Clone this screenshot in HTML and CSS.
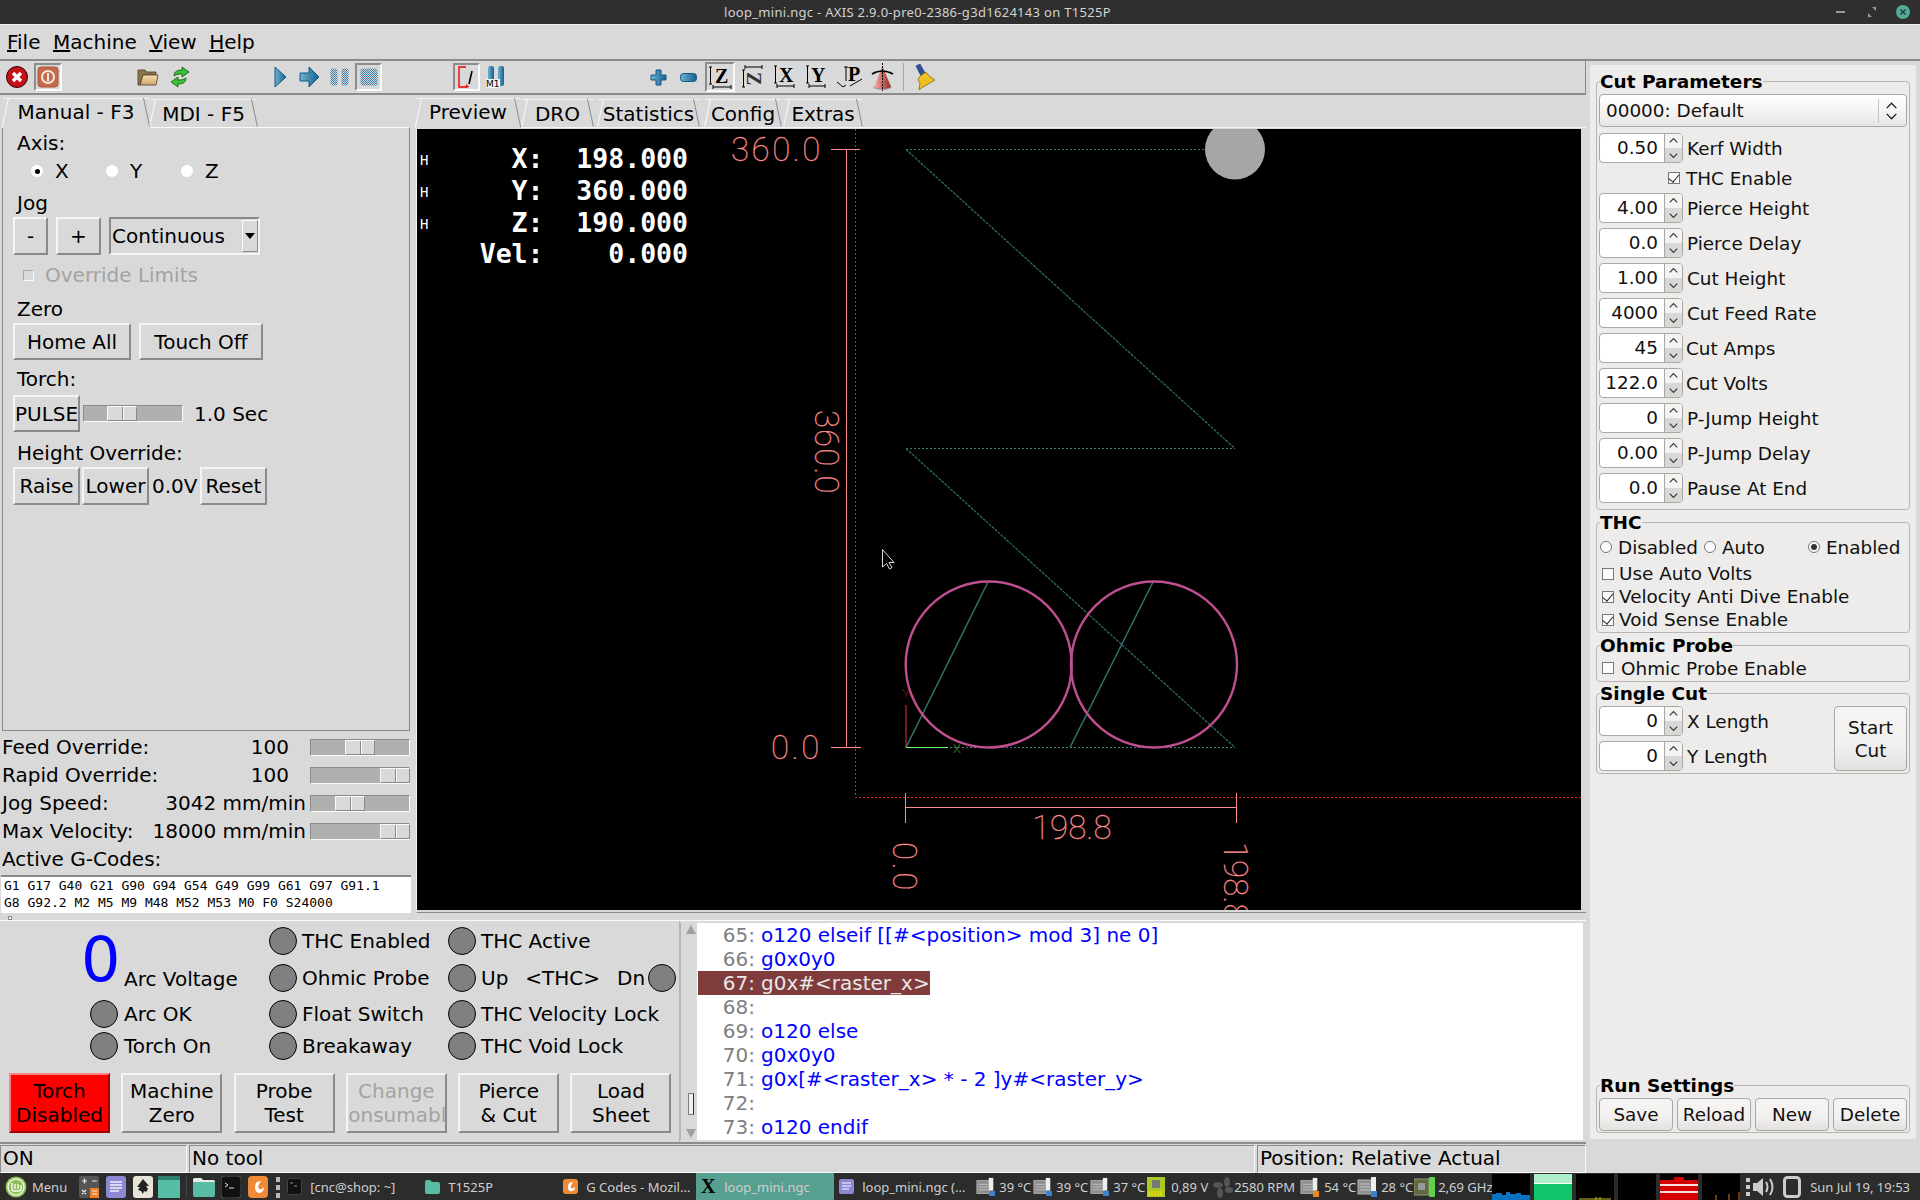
FILE: index.html
```html
<!DOCTYPE html>
<html lang="en">
<head>
  <title>loop_mini.ngc - AXIS</title>
  <meta charset="utf-8">
  <link rel="stylesheet" href="styles.css">
</head>
<body>
<svg class="defs" width="0" height="0">
  <defs>
    <linearGradient id="blue" x1="0" y1="0" x2="1" y2="0">
      <stop offset="0" stop-color="#6fb1d0"/><stop offset="1" stop-color="#17618f"/>
    </linearGradient>
    <linearGradient id="tan" x1="0" y1="0" x2="0" y2="1">
      <stop offset="0" stop-color="#f5deb0"/><stop offset="1" stop-color="#cfa76a"/>
    </linearGradient>
    <linearGradient id="cone" x1="0" y1="0" x2="1" y2="0">
      <stop offset="0" stop-color="#ffb0a8"/><stop offset="1" stop-color="#8e2a22"/>
    </linearGradient>
    <pattern id="dots" width="2" height="2" patternUnits="userSpaceOnUse">
      <rect width="2" height="2" fill="#d9d9d9"/><rect width="1" height="1" fill="#3a7ea6"/><rect x="1" y="1" width="1" height="1" fill="#3a7ea6"/>
    </pattern>
    <symbol id="spin-arrows" viewBox="0 0 18 30">
      <path d="M5 9l4-4 4 4M5 21l4 4 4-4" fill="none" stroke="#333" stroke-width="1.2"/>
    </symbol>
    <symbol id="temp-chip" viewBox="0 0 22 22">
      <rect x="1" y="4" width="14" height="14" fill="#8d8d8d" stroke="#b5b5b5"/>
      <path d="M3 8h10M3 11h10M3 14h10" stroke="#c6c6c6"/>
      <rect x="14" y="1" width="5" height="14" fill="#eee"/>
    </symbol>
  </defs>
</svg>

<header class="titlebar">
  <span class="title-text">loop_mini.ngc - AXIS 2.9.0-pre0-2386-g3d1624143 on T1525P</span>
  <div class="win-buttons">
    <svg width="14" height="14" viewBox="0 0 14 14"><rect x="1" y="6" width="9" height="2" fill="#9a9a9a"/></svg>
    <svg width="14" height="14" viewBox="0 0 14 14"><path d="M3 8v4h4zM11 6V2H7z" fill="#9a9a9a"/></svg>
    <svg width="16" height="16" viewBox="0 0 16 16"><circle cx="8" cy="8" r="7" fill="#56a89a"/><path d="M5.5 5.5l5 5M10.5 5.5l-5 5" stroke="#23403c" stroke-width="1.5"/></svg>
  </div>
</header>

<nav class="menubar">
  <span><u>F</u>ile</span><span><u>M</u>achine</span><span><u>V</u>iew</span><span><u>H</u>elp</span>
</nav>

<div class="workspace">
  <div class="app">
    <div class="toolbar">
      <svg class="ml6" width="22" height="22" viewBox="0 0 22 22"><circle cx="11" cy="11" r="10.5" fill="#c4121a" stroke="#300"/><path d="M7 7l8 8M15 7l-8 8" stroke="#fff" stroke-width="3.4"/></svg>
      <div class="sunken ml6 frame-28"><svg width="22" height="22" viewBox="0 0 22 22"><rect x="1" y="1" width="20" height="20" rx="3" fill="#c46b4b" stroke="#a9543a"/><circle cx="11" cy="11" r="6" fill="none" stroke="#f2e5de" stroke-width="2"/><path d="M11 7v8" stroke="#f2e5de" stroke-width="2"/></svg></div>
      <svg class="ml75" width="22" height="18" viewBox="0 0 22 18"><path d="M1 17V2h7l2 2h9v3H6L3 17z" fill="#8e744c" stroke="#4a3c24" stroke-width=".8"/><path d="M3 17L6 7h15l-2 10z" fill="url(#tan)" stroke="#4a3c24" stroke-width=".8"/></svg>
      <svg class="ml11" width="20" height="22" viewBox="0 0 20 22"><path d="M4 10C4 5 8 4 12 4V1l7 5-7 5V8c-3 0-5 0-8 2z" fill="#38c038" stroke="#0a5a0a" stroke-width=".8"/><path d="M16 12c0 5-4 6-8 6v3l-7-5 7-5v3c3 0 5 0 8-2z" fill="#38c038" stroke="#0a5a0a" stroke-width=".8"/></svg>
      <svg class="ml84" width="13" height="22" viewBox="0 0 13 22"><path d="M1 1l11 10L1 21z" fill="url(#blue)" stroke="#135a85"/></svg>
      <svg class="ml12" width="21" height="22" viewBox="0 0 21 22"><path d="M1 7h9V1l10 10-10 10v-6H1z" fill="url(#blue)" stroke="#135a85"/></svg>
      <svg class="ml10" width="19" height="18" viewBox="0 0 19 18"><rect x=".5" y=".5" width="7" height="17" rx="2" fill="url(#dots)"/><rect x="11.5" y=".5" width="7" height="17" rx="2" fill="url(#dots)"/></svg>
      <div class="sunken ml6 frame-27"><svg width="18" height="18" viewBox="0 0 18 18"><rect x=".5" y=".5" width="17" height="17" rx="2" fill="url(#dots)"/></svg></div>
      <div class="sunken ml71 frame-27"><svg width="20" height="24" viewBox="0 0 20 24"><path d="M9 2H2v20h7" fill="none" stroke="#e00" stroke-width="1.4"/><path d="M9 19l3 3-3 1z" fill="#e00"/><path d="M15 6l-3 13" stroke="#000" stroke-width="1.6"/></svg></div>
      <svg class="ml6" width="19" height="22" viewBox="0 0 19 22"><rect x="2" y="0" width="6" height="17" rx="2" fill="url(#blue)"/><rect x="12" y="0" width="6" height="20" rx="2" fill="url(#blue)"/><rect x="0" y="13" width="14" height="9" fill="#f4f4f4"/><text x="0" y="21" class="m1-text">M1</text></svg>
      <svg class="ml145" width="17" height="17" viewBox="0 0 17 17"><path d="M6 1h5v5h5v5h-5v5H6v-5H1V6h5z" fill="url(#blue)" stroke="#135a85"/></svg>
      <svg class="ml13" width="17" height="9" viewBox="0 0 17 9"><rect x=".5" y=".5" width="16" height="8" rx="3" fill="url(#blue)" stroke="#135a85"/></svg>
      <div class="sunken ml8 frame-30"><svg width="24" height="24" viewBox="0 0 24 24"><path d="M1 2h3M2.500 2v17M1 19h3M5 22h18M5 20v4M23 20v4" stroke="#000" fill="none"/><text x="7" y="18" class="view-text">Z</text></svg></div>
      <svg class="ml6" width="22" height="24" viewBox="0 0 22 24"><path d="M1 5h3M2.500 5v17M1 22h3M4 2h17M4 0v4M21 0v4" stroke="#000" fill="none"/><text transform="translate(6 7) rotate(90)" class="view-text dim">Z</text></svg>
      <svg class="ml10" width="22" height="24" viewBox="0 0 22 24"><path d="M1 1h3M2.500 1v17M1 18h3M4 21h17M4 19v4M21 19v4" stroke="#000" fill="none"/><text x="6" y="17" class="view-text">X</text></svg>
      <svg class="ml10" width="21" height="24" viewBox="0 0 21 24"><path d="M1 1h3M2.500 1v17M1 18h3M4 21h16M4 19v4M20 19v4" stroke="#000" fill="none"/><text x="6" y="17" class="view-text">Y</text></svg>
      <svg class="ml10" width="27" height="24" viewBox="0 0 27 24"><path d="M10 2v14M8 2h4M1 17l6 5 3-2M14 21l12-7" stroke="#000" fill="none"/><text x="12" y="16" class="view-text">P</text></svg>
      <svg class="ml8" width="23" height="28" viewBox="0 0 23 28"><ellipse cx="11.500" cy="24" rx="9" ry="3" fill="#999"/><path d="M11.500 3L3 24q8.500 4 17 0z" fill="url(#cone)"/><path d="M11.500 0v28" stroke="#000" stroke-dasharray="2 1"/><path d="M1 11q10-6 21 0M1 11l3-2M22 11l-3-2" stroke="#000" fill="none" stroke-width="1.5"/></svg>
      <span class="tool-sep ml9"></span>
      <svg class="ml11" width="20" height="26" viewBox="0 0 20 26"><path d="M1 2l4-2 5 9-4 3z" fill="#2f4f9f" stroke="#1b2f66" stroke-width=".6"/><path d="M5 12l6-4 3 4 6 4-12 7-4 3 1-7-2-3z" fill="#f0c020" stroke="#7a5c00" stroke-width=".7"/></svg>
    </div>

    <div class="upper">
      <div class="col-left">
        <div class="tabs">
          <div class="tab active tab-manual">Manual - F3</div>
          <div class="tab tab-mdi">MDI - F5</div>
        </div>
        <section class="manual">
          <div class="cap">Axis:</div>
          <div class="axis-row">
            <span class="axis"><i class="tk-radio on"></i>X</span>
            <span class="axis"><i class="tk-radio"></i>Y</span>
            <span class="axis"><i class="tk-radio"></i>Z</span>
          </div>
          <div class="cap mt4">Jog</div>
          <div class="row row-38 gap8">
            <button class="btn jog-minus">-</button>
            <button class="btn jog-plus">+</button>
            <div class="tk-combo"><span>Continuous</span><b class="tk-drop"></b></div>
          </div>
          <div class="override"><i class="tk-check"></i>Override Limits</div>
          <div class="cap mt6">Zero</div>
          <div class="row row-37 gap8">
            <button class="btn home-all">Home All</button>
            <button class="btn touch-off">Touch Off</button>
          </div>
          <div class="cap mt5">Torch:</div>
          <div class="row row-37 mt2">
            <button class="btn small-btn">PULSE</button>
            <div class="tk-scale pulse-scale"><div class="tk-slider" style="margin-left:23px"></div></div>
            <span class="pulse-val">1.0 Sec</span>
          </div>
          <div class="cap mt7">Height Override:</div>
          <div class="row row-38 gap2">
            <button class="btn small-btn">Raise</button>
            <button class="btn small-btn">Lower</button>
            <span class="volt-val">0.0V</span>
            <button class="btn small-btn">Reset</button>
          </div>
        </section>
        <div class="ov-rows">
          <div class="ov-row"><div class="ov-text"><span>Feed Override:</span><span class="ov-pct">100</span></div><div class="tk-scale"><div class="tk-slider" style="margin-left:34px"></div></div></div>
          <div class="ov-row"><div class="ov-text"><span>Rapid Override:</span><span class="ov-pct">100</span></div><div class="tk-scale"><div class="tk-slider" style="margin-left:69px"></div></div></div>
          <div class="ov-row"><div class="ov-text"><span>Jog Speed:</span><span>3042 mm/min</span></div><div class="tk-scale"><div class="tk-slider" style="margin-left:24px"></div></div></div>
          <div class="ov-row"><div class="ov-text"><span>Max Velocity:</span><span>18000 mm/min</span></div><div class="tk-scale"><div class="tk-slider" style="margin-left:69px"></div></div></div>
          <div class="ov-row">Active G-Codes:</div>
        </div>
        <div class="gcodes">G1 G17 G40 G21 G90 G94 G54 G49 G99 G61 G97 G91.1<br>G8 G92.2 M2 M5 M9 M48 M52 M53 M0 F0 S24000</div>
        <i class="sash"></i>
      </div>

      <div class="col-preview">
        <div class="tabs">
          <div class="tab active tab-preview">Preview</div>
          <div class="tab tab-dro">DRO</div>
          <div class="tab tab-stats">Statistics</div>
          <div class="tab tab-config">Config</div>
          <div class="tab tab-extras">Extras</div>
        </div>
        <div class="preview">
          <svg class="gl" width="1164" height="781" viewBox="417 129 1164 781">
            <rect x="417" y="129" width="1164" height="781" fill="#000"/>
            <!-- soft limits -->
            <path d="M855.500 129V797.500H1581" class="limits"/>
            <!-- program path -->
            <path d="M906 149.500H1235M906 448.500H1235M906 747.500H1235" class="feed dotted"/>
            <path d="M906 149.500L1235 448.500M906 448.500L1235 747.500" class="feed thin"/>
            <path d="M906 747.500L988 582M1070 747.500L1153 582" class="feed"/>
            <circle cx="988.700" cy="664.500" r="83" class="arc"/>
            <circle cx="1154" cy="664.500" r="83" class="arc"/>
            <!-- extents -->
            <path d="M846.500 149.500V747.500M831 149.500H860M831 747.500H861M905.500 807.500H1236.500M905.500 793V823M1236.500 793V823" class="extent"/>
            <text x="731" y="161" class="dim-text">360.0</text>
            <text x="771" y="759" class="dim-text">0.0</text>
            <text x="1032" y="839" class="dim-text" textLength="82">198.8</text>
            <text transform="translate(815 410) rotate(90)" class="dim-text" textLength="86">360.0</text>
            <text transform="translate(893 842) rotate(90)" class="dim-text">0.0</text>
            <text transform="translate(1224 842) rotate(90)" class="dim-text" textLength="82">198.8</text>
            <!-- origin -->
            <path d="M906 747.500V705" stroke="#e33" fill="none"/>
            <path d="M906 747.500H948" stroke="#6f6" fill="none"/>
            <text x="902" y="698" class="axis-label y-label">Y</text>
            <text x="953" y="753" class="axis-label x-label">X</text>
            <circle cx="1235" cy="149.500" r="30" fill="#a6a6a6"/>
            <path d="M882.500 549.500V567l4-3.500 3 5.500 2.500-1.500-3-5h5z" fill="#000" stroke="#ddd"/>
            <!-- position readout -->
            <text x="420" y="165" class="homed">H</text>
            <text x="420" y="197" class="homed">H</text>
            <text x="420" y="229" class="homed">H</text>
            <text x="543.500" y="168" class="dro">X:</text><text x="688" y="168" class="dro">198.000</text>
            <text x="543.500" y="200" class="dro">Y:</text><text x="688" y="200" class="dro">360.000</text>
            <text x="543.500" y="232" class="dro">Z:</text><text x="688" y="232" class="dro">190.000</text>
            <text x="543.500" y="263" class="dro">Vel:</text><text x="688" y="263" class="dro">0.000</text>
          </svg>
        </div>
      </div>
    </div>

    <div class="lower">
      <div class="plasma">
        <div class="leds">
          <div class="arc-volt"><span class="big-zero">0</span><span class="arc-label">Arc Voltage</span></div>
          <div class="led-cell"><i class="led"></i>THC Enabled</div>
          <div class="led-cell cell-c"><i class="led"></i>THC Active</div>
          <div class="led-cell"><i class="led"></i>Ohmic Probe</div>
          <div class="led-cell cell-c"><i class="led"></i><span>Up</span><span class="thc-mid">&lt;THC&gt;</span><span class="thc-dn">Dn</span><i class="led"></i></div>
          <div class="led-cell cell-a"><i class="led"></i>Arc OK</div>
          <div class="led-cell"><i class="led"></i>Float Switch</div>
          <div class="led-cell cell-c"><i class="led"></i>THC Velocity Lock</div>
          <div class="led-cell cell-a"><i class="led"></i>Torch On</div>
          <div class="led-cell"><i class="led"></i>Breakaway</div>
          <div class="led-cell cell-c"><i class="led"></i>THC Void Lock</div>
        </div>
        <div class="plasma-btns">
          <button class="btn tall red"><span>Torch</span><span>Disabled</span></button>
          <button class="btn tall"><span>Machine</span><span>Zero</span></button>
          <button class="btn tall"><span>Probe</span><span>Test</span></button>
          <button class="btn tall off"><span>Change</span><span>Consumable</span></button>
          <button class="btn tall"><span>Pierce</span><span>&amp; Cut</span></button>
          <button class="btn tall"><span>Load</span><span>Sheet</span></button>
        </div>
      </div>
      <div class="code-scroll">
        <i class="arrow up"></i>
        <i class="thumb"></i>
        <i class="arrow"></i>
      </div>
      <div class="code">
        <div class="ln"><b>65:</b>o120 elseif [[#&lt;position&gt; mod 3] ne 0]</div>
        <div class="ln"><b>66:</b>g0x0y0</div>
        <div class="ln cur"><b>67:</b>g0x#&lt;raster_x&gt;</div>
        <div class="ln"><b>68:</b></div>
        <div class="ln"><b>69:</b>o120 else</div>
        <div class="ln"><b>70:</b>g0x0y0</div>
        <div class="ln"><b>71:</b>g0x[#&lt;raster_x&gt; * - 2 ]y#&lt;raster_y&gt;</div>
        <div class="ln"><b>72:</b></div>
        <div class="ln"><b>73:</b>o120 endif</div>
      </div>
    </div>

    <div class="status">
      <div class="st st-on">ON</div>
      <div class="st st-tool">No tool</div>
      <div class="st st-pos">Position: Relative Actual</div>
    </div>
  </div>

  <aside class="side">
    <fieldset class="grp cut">
      <legend>Cut Parameters</legend>
      <div class="combo"><span>00000: Default</span><svg width="28" height="24" viewBox="0 0 28 24"><path d="M8 9l5-5 5 5M8 15l5 5 5-5" fill="none" stroke="#222" stroke-width="1.4"/></svg></div>
      <div class="srow mt6"><div class="spin"><span class="spin-val">0.50</span><svg class="spin-btn" width="18" height="30"><use href="#spin-arrows"/></svg></div><label>Kerf Width</label></div>
      <div class="srow thc-row"><i class="gtk-check on"></i><label>THC Enable</label></div>
      <div class="srow"><div class="spin"><span class="spin-val">4.00</span><svg class="spin-btn" width="18" height="30"><use href="#spin-arrows"/></svg></div><label>Pierce Height</label></div>
      <div class="srow mt5"><div class="spin"><span class="spin-val">0.0</span><svg class="spin-btn" width="18" height="30"><use href="#spin-arrows"/></svg></div><label>Pierce Delay</label></div>
      <div class="srow mt5"><div class="spin"><span class="spin-val">1.00</span><svg class="spin-btn" width="18" height="30"><use href="#spin-arrows"/></svg></div><label>Cut Height</label></div>
      <div class="srow mt5"><div class="spin"><span class="spin-val">4000</span><svg class="spin-btn" width="18" height="30"><use href="#spin-arrows"/></svg></div><label>Cut Feed Rate</label></div>
      <div class="srow mt5"><div class="spin"><span class="spin-val">45</span><svg class="spin-btn" width="18" height="30"><use href="#spin-arrows"/></svg></div><label class="tight">Cut Amps</label></div>
      <div class="srow mt5"><div class="spin"><span class="spin-val">122.0</span><svg class="spin-btn" width="18" height="30"><use href="#spin-arrows"/></svg></div><label class="tight">Cut Volts</label></div>
      <div class="srow mt5"><div class="spin"><span class="spin-val">0</span><svg class="spin-btn" width="18" height="30"><use href="#spin-arrows"/></svg></div><label>P-Jump Height</label></div>
      <div class="srow mt5"><div class="spin"><span class="spin-val">0.00</span><svg class="spin-btn" width="18" height="30"><use href="#spin-arrows"/></svg></div><label>P-Jump Delay</label></div>
      <div class="srow mt5"><div class="spin"><span class="spin-val">0.0</span><svg class="spin-btn" width="18" height="30"><use href="#spin-arrows"/></svg></div><label>Pause At End</label></div>
    </fieldset>

    <fieldset class="grp thc">
      <legend>THC</legend>
      <div class="thc-modes">
        <span class="mode mode-dis"><i class="gtk-radio"></i>Disabled</span>
        <span class="mode mode-auto"><i class="gtk-radio"></i>Auto</span>
        <span class="mode"><i class="gtk-radio on"></i>Enabled</span>
      </div>
      <div class="crow first"><i class="gtk-check"></i>Use Auto Volts</div>
      <div class="crow"><i class="gtk-check on"></i>Velocity Anti Dive Enable</div>
      <div class="crow"><i class="gtk-check on"></i>Void Sense Enable</div>
    </fieldset>

    <fieldset class="grp ohmic">
      <legend>Ohmic Probe</legend>
      <div class="crow"><i class="gtk-check"></i>Ohmic Probe Enable</div>
    </fieldset>

    <fieldset class="grp single">
      <legend>Single Cut</legend>
      <div class="single-body">
        <div>
          <div class="srow"><div class="spin"><span class="spin-val">0</span><svg class="spin-btn" width="18" height="30"><use href="#spin-arrows"/></svg></div><label>X Length</label></div>
          <div class="srow mt5"><div class="spin"><span class="spin-val">0</span><svg class="spin-btn" width="18" height="30"><use href="#spin-arrows"/></svg></div><label>Y Length</label></div>
        </div>
        <button class="gtk-btn start-cut">Start<br>Cut</button>
      </div>
    </fieldset>

    <fieldset class="grp run">
      <legend>Run Settings</legend>
      <div class="run-btns">
        <button class="gtk-btn">Save</button>
        <button class="gtk-btn">Reload</button>
        <button class="gtk-btn">New</button>
        <button class="gtk-btn">Delete</button>
      </div>
    </fieldset>
  </aside>
</div>

<footer class="taskbar">
  <svg class="ml5" width="22" height="22" viewBox="0 0 22 22"><circle cx="11" cy="11" r="10.500" fill="#8cc152"/><circle cx="11" cy="11" r="8" fill="none" stroke="#f2f2f2" stroke-width="1.500"/><path d="M7 7v6q0 2 2 2h5q2 0 2-2V9M10 8v5M13 8v5" fill="none" stroke="#fff" stroke-width="1.300"/></svg>
  <span class="ml5 tk-text">Menu</span>
  <svg class="ml12" width="20" height="22" viewBox="0 0 20 22"><rect x="0" y="0" width="20" height="22" rx="2" fill="#555"/><rect x="11" y="12" width="9" height="10" fill="#f07f2a"/><path d="M3 5h5M5.500 2.500v5M13 5h5M3 14l4 4M7 14l-4 4M13 15h5M13 18h5" stroke="#eee" stroke-width="1.200"/></svg>
  <svg class="ml7" width="20" height="22" viewBox="0 0 20 22"><rect width="20" height="22" rx="3" fill="#8c88d4"/><path d="M4 6h12M4 9h12M4 12h12M4 15h9" stroke="#f1f1fb" stroke-width="1.300"/></svg>
  <svg class="ml7" width="20" height="22" viewBox="0 0 20 22"><rect width="20" height="22" rx="3" fill="#e8e4d8"/><path d="M10 3l6 7h-3l2 3-2 3-2-1-1 3-2-3-3-1 2-3H4z" fill="#222"/></svg>
  <svg class="ml5" width="22" height="22" viewBox="0 0 22 22"><rect width="22" height="22" fill="#57bda5"/><rect width="22" height="4" fill="#2f7f6e"/></svg>
  <span class="task-sep ml6"></span>
  <svg class="ml6" width="22" height="20" viewBox="0 0 22 20"><path d="M0 3q0-2 2-2h6l2 2h10q2 0 2 2v13q0 2-2 2H2q-2 0-2-2z" fill="#57bda5"/><path d="M0 5V3q0-2 2-2h6l2 2h10q2 0 2 2z" fill="#e8e8e8"/></svg>
  <svg class="ml6" width="20" height="22" viewBox="0 0 20 22"><rect width="20" height="22" rx="3" fill="#111" stroke="#555"/><path d="M4 7l3 2-3 2M8 12h5" stroke="#ddd" fill="none"/></svg>
  <svg class="ml7" width="20" height="22" viewBox="0 0 20 22"><rect width="20" height="22" rx="4" fill="#f08a36"/><path d="M13 5q-6 0-6 6t5 6q4-1 4-6-2 3-5 2-2-3 2-8z" fill="#fff"/></svg>
  <svg class="ml8" width="4" height="22" viewBox="0 0 4 22"><path d="M0 1h4v5H0zM0 9h4v5H0zM0 17h4v5H0z" fill="#bbb"/></svg>
  <div class="win win-first"><svg width="15" height="17" viewBox="0 0 15 17"><rect x=".5" y=".5" width="14" height="16" rx="2" fill="#111" stroke="#444"/><path d="M3 5h3M7 8h3" stroke="#888"/></svg><span class="tk-text">[cnc@shop: ~]</span></div>
  <div class="win"><svg width="15" height="15" viewBox="0 0 15 15"><path d="M0 3q0-2 2-2h3l2 2h6q2 0 2 2v8q0 2-2 2H2q-2 0-2-2z" fill="#57bda5"/></svg><span class="tk-text">T1525P</span></div>
  <div class="win"><svg width="15" height="15" viewBox="0 0 15 15"><rect width="15" height="15" rx="3" fill="#f08a36"/><path d="M10 3q-5 0-5 5t4 4q3 0 3-4-2 2-4 1-1-2 2-6z" fill="#fff"/></svg><span class="tk-text">G Codes - Mozil...</span></div>
  <div class="win active"><svg width="15" height="17" viewBox="0 0 15 17"><text x="0" y="15" class="x-icon">X</text></svg><span class="tk-text">loop_mini.ngc</span></div>
  <div class="win"><svg width="15" height="15" viewBox="0 0 15 15"><rect width="15" height="15" rx="2" fill="#8c88d4"/><path d="M3 4h9M3 7h9M3 10h7" stroke="#fff"/></svg><span class="tk-text">loop_mini.ngc (...</span></div>
  <div class="sensor ml4"><svg class="temp cool" width="20" height="22"><use href="#temp-chip"/><rect x="13" y="15" width="6" height="5" fill="currentColor"/></svg><span class="tk-text">39 °C</span></div>
  <div class="sensor"><svg class="temp cool" width="20" height="22"><use href="#temp-chip"/><rect x="13" y="15" width="6" height="5" fill="currentColor"/></svg><span class="tk-text">39 °C</span></div>
  <div class="sensor"><svg class="temp cool" width="20" height="22"><use href="#temp-chip"/><rect x="13" y="15" width="6" height="5" fill="currentColor"/></svg><span class="tk-text">37 °C</span></div>
  <svg class="ml0" width="18" height="20" viewBox="0 0 18 20"><rect width="18" height="20" fill="#a9c926"/><rect x="5" y="3" width="8" height="8" fill="#777"/><path d="M2 14v5M5 14v5M8 14v5M11 14v5M14 14v5" stroke="#f4d800" stroke-width="1.500"/></svg>
  <span class="ml6 tk-text">0,89 V</span>
  <svg class="ml5" width="20" height="22" viewBox="0 0 20 22"><g fill="#555"><ellipse cx="14" cy="6" rx="3" ry="5"/><ellipse cx="5" cy="9" rx="5" ry="3"/><ellipse cx="7" cy="17" rx="3" ry="5"/><ellipse cx="16" cy="14" rx="4" ry="3"/></g></svg>
  <span class="ml1 tk-text rpm">2580 RPM</span>
  <svg class="temp hot ml4" width="20" height="22"><use href="#temp-chip"/><rect x="13" y="15" width="6" height="6" fill="currentColor"/></svg>
  <span class="ml4 tk-text t31">54 °C</span>
  <svg class="temp cool ml2" width="22" height="22"><use href="#temp-chip"/><rect x="14" y="15" width="6" height="6" fill="currentColor"/></svg>
  <span class="ml2 tk-text t31">28 °C</span>
  <svg class="ml2" width="21" height="20" viewBox="0 0 21 20"><rect x="0" y="2" width="15" height="16" fill="#5b6b3c" stroke="#9a9a7a"/><rect x="4" y="6" width="7" height="7" fill="#999"/><rect x="15" y="0" width="6" height="20" rx="1" fill="#5fd24a"/></svg>
  <span class="ml3 tk-text ghz">2,69 GHz</span>
  <div class="graphs">
    <svg width="38" height="26" viewBox="0 0 38 26"><rect width="38" height="26" fill="#000"/><path d="M0 26v-6h4v-1h6v2h4v-3h4v2h6v-1h5v2h9v5z" fill="#0b72c0"/></svg>
    <svg width="38" height="26" viewBox="0 0 38 26"><rect width="38" height="26" fill="#aef0cc"/><rect y="9" width="38" height="17" fill="#12c46a"/><rect y="9" width="38" height="1" fill="#fff"/></svg>
    <svg width="38" height="26" viewBox="0 0 38 26"><rect width="38" height="26" fill="#000"/><path d="M3 25h32M20 23v3M24 23v3" stroke="#c9c22a"/></svg>
    <svg width="38" height="26" viewBox="0 0 38 26"><rect width="38" height="26" fill="#000"/></svg>
    <svg width="38" height="26" viewBox="0 0 38 26"><rect width="38" height="26" fill="#000"/><path d="M0 6h14V3h10v3h14v20H0z" fill="#d40000"/><path d="M0 11h38M0 18h38" stroke="#f2dede" stroke-width="2"/></svg>
    <svg width="38" height="26" viewBox="0 0 38 26"><rect width="38" height="26" fill="#000"/><path d="M14 21v5M27 20v6M37 18v8" stroke="#d9741c"/></svg>
  </div>
  <svg class="ml6" width="29" height="22" viewBox="0 0 29 22"><path d="M0 2h4v4H0zM0 9h4v4H0zM0 16h4v4H0z" fill="#ccc"/><path d="M7 7h4l6-5v18l-6-5H7z" fill="#ccc"/><path d="M20 6q3 5 0 10M24 3q5 8 0 16" fill="none" stroke="#ccc" stroke-width="2"/></svg>
  <svg class="ml8" width="18" height="22" viewBox="0 0 18 22"><rect x="1.500" y="1.500" width="15" height="19" rx="3" fill="none" stroke="#ccc" stroke-width="3"/></svg>
  <span class="ml9 tk-text">Sun Jul 19, 19:53</span>
</footer>
</body>
</html>
```

FILE: styles.css
```css
* {
  box-sizing: border-box;
}

html,
body {
  margin: 0;
  padding: 0;
}

body {
  width: 1920px;
  height: 1200px;
  overflow: hidden;
  display: flex;
  flex-direction: column;
  background: #d9d9d9;
  color: #000;
  font-family: "DejaVu Sans", sans-serif;
  font-size: 20px;
}

i {
  font-style: normal;
  display: block;
  flex: none;
}

svg {
  display: block;
  flex: none;
}

.defs {
  position: absolute;
}

/* utility gaps, the toolbars are a plain strip of icons */
.ml0 { margin-left: 0; }
.ml1 { margin-left: 1px; }
.ml2 { margin-left: 2px; }
.ml3 { margin-left: 3px; }
.ml4 { margin-left: 4px; }
.ml5 { margin-left: 5px; }
.ml6 { margin-left: 6px; }
.ml7 { margin-left: 7px; }
.ml8 { margin-left: 8px; }
.ml9 { margin-left: 9px; }
.ml10 { margin-left: 10px; }
.ml11 { margin-left: 11px; }
.ml12 { margin-left: 12px; }
.ml13 { margin-left: 13px; }
.ml71 { margin-left: 71px; }
.ml75 { margin-left: 75px; }
.ml84 { margin-left: 84px; }
.ml145 { margin-left: 145px; }
.mt2 { margin-top: 2px; }
.mt4 { margin-top: 4px; }
.mt5 { margin-top: 5px; }
.mt6 { margin-top: 6px; }
.mt7 { margin-top: 7px; }

/* window frame */
.titlebar {
  flex: none;
  height: 25px;
  display: flex;
  align-items: center;
  background: #2f2f2f;
  border-bottom: 1px solid #f0f0f0;
  color: #d2d2d2;
  font-family: "Noto Sans", sans-serif;
  font-size: 13px;
  letter-spacing: 0.3px;
}

.title-text {
  margin-left: 724px;
}

.win-buttons {
  margin-left: auto;
  margin-right: 9px;
  display: flex;
  align-items: center;
  gap: 16px;
}

.menubar {
  flex: none;
  height: 36px;
  display: flex;
  align-items: center;
  gap: 12.500px;
  padding-left: 7px;
  border-bottom: 2px solid #8c8c8c;
}

.workspace {
  flex: none;
  height: 1112px;
  display: flex;
}

.app {
  width: 1586px;
  display: flex;
  flex-direction: column;
}

/* toolbar */
.toolbar {
  flex: none;
  height: 34px;
  display: flex;
  align-items: center;
  border-bottom: 2px solid #8c8c8c;
  border-right: 1px solid #8c8c8c;
}

.sunken {
  display: flex;
  align-items: center;
  justify-content: center;
  border: 2px solid;
  border-color: #8c8c8c #fafafa #fafafa #8c8c8c;
}

.frame-28 {
  width: 28px;
  height: 28px;
}

.frame-27 {
  width: 27px;
  height: 28px;
}

.frame-30 {
  width: 30px;
  height: 30px;
}

.m1-text {
  font-family: "DejaVu Sans", sans-serif;
  font-size: 9px;
}

.view-text {
  font-family: "Liberation Serif", serif;
  font-weight: bold;
  font-size: 20px;
}

.view-text.dim {
  fill: #333;
}

.tool-sep {
  width: 1px;
  height: 28px;
  background: #a8a8a8;
}

/* notebook tabs */
.upper {
  flex: none;
  height: 825px;
  display: flex;
}

.col-left {
  width: 412px;
  display: flex;
  flex-direction: column;
}

.col-preview {
  width: 1170px;
  margin-left: 4px;
  display: flex;
  flex-direction: column;
}

.tabs {
  flex: none;
  height: 32px;
  display: flex;
  align-items: flex-end;
  position: relative;
  z-index: 1;
}

.tab {
  height: 28px;
  display: flex;
  align-items: center;
  justify-content: center;
  border-top: 1px solid #f4f4f4;
  position: relative;
  white-space: nowrap;
}

.tab::before,
.tab::after {
  content: "";
  position: absolute;
  top: -1px;
  bottom: 0;
  width: 1px;
  transform-origin: top center;
}

.tab::before {
  left: 5px;
  background: #fafafa;
  transform: rotate(12deg);
}

.tab::after {
  right: 5px;
  background: #8c8c8c;
  transform: rotate(-12deg);
}

.tab.active {
  height: 30px;
  padding-bottom: 4px;
  margin-bottom: -1px;
  background: #d9d9d9;
}

.tab-manual {
  margin-left: 3px;
  width: 146px;
}

.tab-mdi {
  margin-left: 1px;
  width: 107px;
}

.tab-preview {
  width: 104px;
}

.tab-dro {
  margin-left: 2px;
  width: 71px;
}

.tab-stats {
  margin-left: 5px;
  width: 101px;
}

.tab-config {
  margin-left: 6px;
  width: 76px;
}

.tab-extras {
  margin-left: 3px;
  width: 78px;
}

/* manual panel */
.manual {
  flex: none;
  height: 604px;
  margin-left: 2px;
  width: 408px;
  padding: 1px 0 0 10px;
  border: 1px solid #8c8c8c;
  border-top-color: #fafafa;
}

.cap {
  height: 28px;
  line-height: 28px;
  padding-left: 4px;
}

.axis-row {
  height: 28px;
  display: flex;
  align-items: center;
  padding-left: 18px;
}

.axis {
  width: 75px;
  display: flex;
  align-items: center;
  gap: 12px;
}

.tk-radio {
  width: 12px;
  height: 12px;
  border-radius: 50%;
  background: #fff;
  display: flex;
  align-items: center;
  justify-content: center;
}

.tk-radio.on::after {
  content: "";
  width: 5px;
  height: 5px;
  border-radius: 50%;
  background: #000;
}

.row {
  display: flex;
  align-items: stretch;
}

.row-38 {
  height: 38px;
}

.row-37 {
  height: 37px;
}

.gap8 {
  gap: 8px;
}

.gap2 {
  gap: 2px;
}

.btn {
  flex: none;
  padding: 0;
  font: inherit;
  color: #000;
  background: #d9d9d9;
  border: 2px solid;
  border-color: #f4f4f4 #8a8a8a #8a8a8a #f4f4f4;
  border-radius: 0;
}

.jog-minus {
  width: 35px;
}

.jog-plus {
  width: 45px;
}

.home-all {
  width: 118px;
}

.touch-off {
  width: 124px;
}

.small-btn {
  width: 67px;
}

.tk-combo {
  width: 151px;
  display: flex;
  align-items: center;
  padding-left: 1px;
  border: 2px solid;
  border-color: #8a8a8a #f4f4f4 #f4f4f4 #8a8a8a;
}

.tk-combo span {
  flex: 1;
}

.tk-drop {
  width: 16px;
  height: 32px;
  display: flex;
  align-items: center;
  justify-content: center;
  border: 1px solid;
  border-color: #fafafa #8a8a8a #8a8a8a #fafafa;
}

.tk-drop::after {
  content: "";
  border-left: 5px solid transparent;
  border-right: 5px solid transparent;
  border-top: 6px solid #000;
}

.override {
  height: 28px;
  margin-top: 6px;
  display: flex;
  align-items: center;
  gap: 11px;
  padding-left: 10px;
  color: #a3a3a3;
}

.tk-check {
  width: 11px;
  height: 11px;
  border: 1px solid #a8a8a8;
  border-right-color: #fafafa;
  border-bottom-color: #fafafa;
}

.tk-scale {
  flex: none;
  width: 100px;
  height: 17px;
  background: #b0b0b0;
  border: 1px solid;
  border-color: #8a8a8a #fafafa #fafafa #8a8a8a;
}

.tk-slider {
  width: 30px;
  height: 15px;
  background: linear-gradient(90deg, #d9d9d9 14px, #8a8a8a 14px, #8a8a8a 15px, #fafafa 15px, #fafafa 16px, #d9d9d9 16px);
  border: 1px solid;
  border-color: #fafafa #8a8a8a #8a8a8a #fafafa;
}

.pulse-scale {
  align-self: center;
  margin-left: 3px;
}

.pulse-val {
  align-self: center;
  margin-left: 11px;
}

.volt-val {
  width: 46px;
  margin: 0 0 0 1px;
  align-self: center;
  white-space: nowrap;
}

/* overrides below the panel */
.ov-rows {
  flex: none;
  padding-top: 2px;
}

.ov-row {
  height: 28px;
  display: flex;
  align-items: center;
  padding-left: 2px;
}

.ov-text {
  width: 304px;
  margin-right: 4px;
  display: flex;
  justify-content: space-between;
}

.ov-pct {
  padding-right: 17px;
}

.gcodes {
  flex: none;
  height: 38px;
  margin: 2px 0 0 1px;
  width: 410px;
  padding: 0 0 0 3px;
  background: #fff;
  border-top: 2px solid #8a8a8a;
  font-family: "DejaVu Sans Mono", monospace;
  font-size: 13px;
  line-height: 17px;
  white-space: nowrap;
  overflow: hidden;
}

.sash {
  width: 4px;
  height: 4px;
  margin: 3px 0 0 8px;
  background: #fafafa;
  border: 1px solid #8a8a8a;
}

/* preview canvas */
.preview {
  flex: none;
  height: 786px;
  padding-top: 1px;
  border-top: 1px solid #f4f4f4;
  border-left: 1px solid #f4f4f4;
  border-bottom: 1px solid #8c8c8c;
}

.limits {
  fill: none;
  stroke: #e02020;
  stroke-dasharray: 2 2;
}

.feed {
  fill: none;
  stroke: #2f6f6b;
  stroke-width: 1.6;
}

.feed.dotted {
  stroke: #3a7d78;
  stroke-width: 1;
  stroke-dasharray: 2 2;
}

.feed.thin {
  stroke-width: 1.2;
  stroke: #2f6f6b;
  stroke-dasharray: 3 1;
}

.arc {
  fill: none;
  stroke: #bf4f8f;
  stroke-width: 2.4;
}

.extent {
  fill: none;
  stroke: #ff8a8a;
  stroke-width: 1;
}

.gl .dim-text {
  font-family: "Roboto", sans-serif;
  font-weight: 100;
  font-size: 33px;
  letter-spacing: 2.5px;
  fill: #ff8a8a;
  stroke: #ff8a8a;
  stroke-width: 0.3;
}

.gl .axis-label {
  font-family: "Roboto", sans-serif;
  font-weight: 100;
  font-size: 13px;
}

.y-label {
  fill: #e33;
}

.x-label {
  fill: #6f6;
}

.gl .homed {
  font-family: "DejaVu Sans Mono", monospace;
  font-size: 14px;
  fill: #fff;
}

.gl .dro {
  font-family: "DejaVu Sans Mono", monospace;
  font-weight: bold;
  font-size: 26.500px;
  fill: #fff;
  text-anchor: end;
}

/* plasma panel and gcode */
.lower {
  flex: none;
  height: 222px;
  display: flex;
  border-top: 1px solid #fafafa;
}

.plasma {
  width: 680px;
  border-right: 1px solid #b4b4b4;
}

.leds {
  height: 142px;
  display: grid;
  grid-template-columns: 269px 179px 1fr;
  grid-template-rows: 39px 36px 36px 27px;
}

.arc-volt {
  grid-row: 1 / span 2;
  grid-column: 1;
  display: flex;
  align-items: center;
  padding-left: 81px;
}

.big-zero {
  font-size: 62px;
  line-height: 62px;
  color: #0000ff;
  width: 43px;
  flex: none;
  margin-top: 2px;
}

.arc-label {
  margin-top: 41px;
}

.led-cell {
  display: flex;
  align-items: center;
  gap: 5px;
  white-space: nowrap;
}

.cell-a {
  padding-left: 90px;
  gap: 6px;
  grid-column: 1;
}

.led {
  width: 28px;
  height: 28px;
  border-radius: 50%;
  background: #808080;
  border: 1px solid #000;
}

.thc-mid {
  margin-left: 12px;
}

.thc-dn {
  margin-left: 12px;
  margin-right: -2px;
}

.plasma-btns {
  display: flex;
  gap: 11.300px;
  padding: 10px 0 0 9px;
}

.btn.tall {
  width: 101px;
  height: 60px;
  display: flex;
  flex-direction: column;
  align-items: stretch;
  justify-content: center;
  overflow: hidden;
  line-height: 24px;
}

.btn.tall span {
  display: flex;
  justify-content: center;
  overflow: hidden;
  white-space: nowrap;
}

.btn.red {
  background: #ff0000;
  border-color: #ff8080 #a00000 #a00000 #ff8080;
}

.btn.off {
  color: #a3a3a3;
}

.code-scroll {
  width: 17px;
  margin-top: 2px;
  height: 217px;
  padding: 2px 6px 2px 5px;
  display: flex;
  flex-direction: column;
  border-left: 1px solid #b4b4b4;
}

.code-scroll .arrow {
  width: 10px;
  height: 9px;
  background: #a0a0a0;
  clip-path: polygon(50% 100%, 0 0, 100% 0);
}

.code-scroll .arrow.up {
  clip-path: polygon(50% 0, 0 100%, 100% 100%);
}

.thumb {
  width: 6px;
  height: 22px;
  margin: auto 0 14px 2px;
  border: 1px solid #7f7f7f;
  border-right-color: #333;
  background: #eee;
}

.code {
  flex: 1;
  margin: 2px 3px 0 0;
  height: 217px;
  background: #fff;
  color: #0000ff;
  line-height: 24px;
  overflow: hidden;
  padding-left: 1px;
}

.ln {
  height: 24px;
  white-space: pre;
}

.ln b {
  display: inline-block;
  width: 57px;
  margin-right: 6px;
  text-align: right;
  font-weight: normal;
  color: #808080;
}

.ln.cur {
  width: 232px;
  background: #803c3c;
  color: #e8e8e8;
}

.ln.cur b {
  color: #e8e8e8;
}

/* status bar */
.status {
  flex: none;
  height: 31px;
  display: flex;
  gap: 2px;
  border-top: 2px solid #8c8c8c;
  padding-top: 1px;
}

.st {
  height: 28px;
  line-height: 24px;
  padding-left: 2px;
  border: 1px solid;
  border-color: #8c8c8c #fafafa #fafafa #8c8c8c;
}

.st-on {
  width: 187px;
}

.st-tool {
  width: 1066px;
}

.st-pos {
  width: 329px;
}

/* right hand gtk panel */
.side {
  width: 326px;
  height: 1074px;
  margin: 4px 0 0 4px;
  padding: 5px 6px 6px 6px;
  display: flex;
  flex-direction: column;
  background: #edecea;
  font-size: 18.400px;
  color: #111;
}

.grp {
  margin: 0;
  padding: 0 2px;
  min-width: 0;
  border: 1px solid #b8b6b3;
  border-radius: 4px;
}

.grp legend {
  padding: 0;
  margin-left: 1px;
  font-weight: bold;
  font-size: 18.500px;
  line-height: 23px;
  color: #000;
}

.cut {
  padding-bottom: 6px;
}

.combo {
  height: 33px;
  margin-top: 1px;
  display: flex;
  align-items: center;
  padding-left: 6px;
  background: linear-gradient(180deg, #fff 0, #f5f4f3 50%, #e7e6e4 100%);
  border: 1px solid #aaa8a5;
  border-radius: 4px;
}

.combo span {
  flex: 1;
}

.combo svg {
  border-left: 1px solid #c8c6c3;
}

.srow {
  height: 30px;
  display: flex;
  align-items: center;
}

.srow label {
  margin-left: 4px;
}

.srow label.tight {
  margin-left: 3px;
}

.thc-row {
  padding-left: 69px;
}

.thc-row label {
  margin-left: 6px;
}

.spin {
  flex: none;
  width: 84px;
  height: 30px;
  display: flex;
  border: 1px solid #aaa8a5;
  border-radius: 4px;
  overflow: hidden;
  background: #fff;
}

.spin-val {
  flex: 1;
  text-align: right;
  line-height: 28px;
  padding-right: 6px;
}

.spin-btn {
  height: 28px;
  background: linear-gradient(180deg, #f4f3f2 0, #f4f3f2 50%, #d9d8d6 50%, #d9d8d6 100%);
  border-left: 1px solid #aaa8a5;
}

.gtk-check {
  width: 12px;
  height: 12px;
  background: #fbfbfb;
  border: 1px solid #777;
  display: flex;
  align-items: center;
  justify-content: center;
}

.gtk-check.on::after {
  content: "";
  width: 5px;
  height: 9px;
  margin-top: -2px;
  border: solid #222;
  border-width: 0 1.6px 1.6px 0;
  transform: rotate(40deg);
}

.gtk-radio {
  width: 12px;
  height: 12px;
  border-radius: 50%;
  background: #fbfbfb;
  border: 1px solid #777;
  display: flex;
  align-items: center;
  justify-content: center;
}

.gtk-radio.on::after {
  content: "";
  width: 6px;
  height: 6px;
  border-radius: 50%;
  background: #333;
}

.thc {
  margin-top: 1px;
  height: 122px;
}

.thc-modes {
  height: 24px;
  margin-top: 1px;
  display: flex;
  align-items: center;
  padding-left: 1px;
}

.mode {
  display: flex;
  align-items: center;
  gap: 6px;
}

.mode-dis,
.mode-auto {
  width: 104px;
}

.crow {
  height: 23px;
  display: flex;
  align-items: center;
  gap: 5px;
  padding-left: 3px;
}

.crow.first {
  margin-top: 3px;
}

.ohmic {
  margin-top: 1px;
  height: 48px;
}

.ohmic .crow {
  gap: 7px;
  height: 20px;
  margin-top: 1px;
}

.single {
  height: 92px;
}

.single-body {
  margin-top: 1px;
  display: flex;
  justify-content: space-between;
}

.gtk-btn {
  padding: 0;
  font: inherit;
  color: #111;
  background: linear-gradient(180deg, #f6f5f4 0, #f1f0ef 60%, #e2e1df 100%);
  border: 1px solid #aaa8a5;
  border-radius: 4px;
}

.start-cut {
  width: 73px;
  height: 65px;
  line-height: 23px;
}

.run {
  margin-top: auto;
  height: 59px;
}

.run-btns {
  margin-top: 1px;
  display: flex;
  gap: 4px;
}

.run-btns .gtk-btn {
  flex: 1;
  height: 33px;
}

/* panel at the bottom of the screen */
.taskbar {
  flex: none;
  height: 27px;
  display: flex;
  align-items: center;
  background: #2c2c2c;
  font-family: "Noto Sans", sans-serif;
  font-size: 13px;
  color: #cfcfcf;
}

.tk-text {
  white-space: nowrap;
}

.task-sep {
  width: 1px;
  height: 22px;
  background: #444;
}

.win {
  width: 138px;
  height: 27px;
  display: flex;
  align-items: center;
  gap: 8px;
  padding-left: 5px;
}

.win-first {
  margin-left: 2px;
}

.win.active {
  background: #57a08f;
}

.x-icon {
  font-family: "Liberation Serif", serif;
  font-weight: bold;
  font-size: 20px;
  fill: #000;
}

.sensor {
  width: 57px;
  display: flex;
  align-items: center;
  gap: 3px;
}

.temp.cool {
  color: #3f7fcf;
}

.temp.hot {
  color: #ef8a1a;
}

.rpm {
  width: 62px;
}

.t31 {
  width: 31px;
}

.ghz {
  width: 53px;
}

.graphs {
  display: flex;
  gap: 4px;
  margin-left: 1px;
  height: 26px;
}
```
